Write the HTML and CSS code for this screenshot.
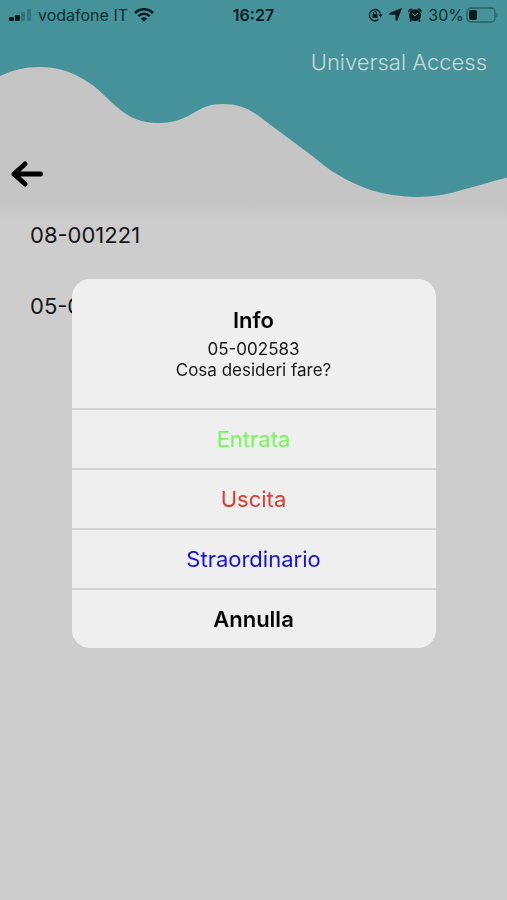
FILE: index.html
```html
<!DOCTYPE html>
<html lang="it">
<head>
<meta charset="utf-8">
<meta name="viewport" content="width=device-width, initial-scale=1">
<title>Universal Access</title>
<link rel="stylesheet" href="styles.css">
</head>
<body>
<div class="app">
  <header class="header">
    <svg class="wave" viewBox="0 0 507 200" preserveAspectRatio="none" aria-hidden="true">
      <path d="M0 0H507V177.500C490 182 477 186 455 192C437 196.500 425 197 414 197C385 196 360 189 335 173C325 167 319 161 311 155L264 120C250 109 240 104 223 104C210 104 203 107 190 115C181 120 171 123 158 123C142 123 130 118 118 108C107 99 99 88 83 79C70 71 56 67 40 67C25 67 13 70 0 76Z"/>
    </svg>
    <div class="status">
      <div class="status-side">
        <svg width="24" height="14" viewBox="0 0 24 14" aria-hidden="true">
          <rect x="1" y="9" width="5" height="4" rx="1"/>
          <rect x="7" y="7" width="5" height="6" rx="1"/>
          <g opacity=".25"><rect x="13" y="4" width="4" height="9" rx="1"/><rect x="19" y="1" width="4" height="12" rx="1"/></g>
        </svg>
        <span>vodafone IT</span>
        <svg width="20" height="14" viewBox="0 0 20 14" fill="none" stroke="#071c1f" aria-hidden="true">
          <path stroke-width="2.600" d="M1 5C6 0 14 0 19 5M4.300 8.200C7.500 5 12.500 5 15.700 8.200"/>
          <path fill="#071c1f" stroke="none" d="M6.900 10.600Q10 8 13.100 10.600L10 14Z"/>
        </svg>
      </div>
      <strong class="clock">16:27</strong>
      <div class="status-side status-right">
        <svg width="15" height="14" viewBox="0 0 15 14" aria-hidden="true">
          <path fill="none" stroke="#071c1f" stroke-width="1.300" d="M10.500 11.500A5.600 5.600 0 1 1 12.600 7"/>
          <path d="M10.400 6.500H14.600L12.500 9.500Z"/>
          <rect x="4.500" y="6" width="5" height="4" rx=".5"/>
          <path fill="none" stroke="#071c1f" d="M5.500 6V5a1.500 1.500 0 0 1 3 0V6"/>
        </svg>
        <svg width="13" height="13" viewBox="0 0 13 13" aria-hidden="true"><path d="M13 0L8.500 12.200Q7.500 13.500 6.500 12V6.800H1Q-.8 6 1 4.800Z"/></svg>
        <svg width="14" height="14" viewBox="0 0 14 14" aria-hidden="true">
          <circle cx="7" cy="7.200" r="6"/>
          <path d="M.5 4.500A3 3 0 0 1 5 1ZM13.500 4.500A3 3 0 0 0 9 1ZM2 11L4 13 2.500 14 1.500 13ZM12 11L10 13 11.500 14 12.500 13Z"/>
          <path fill="none" stroke="#45929a" d="M4.300 5.500L7 8L10 5"/>
        </svg>
        <div class="battery">
          <span>30%</span>
          <svg width="33" height="16" viewBox="0 0 33 16" aria-hidden="true">
            <rect x="1" y="1" width="28" height="14" rx="4" fill="none" stroke="#285f66" stroke-width="1.300"/>
            <rect x="3" y="3" width="8" height="10" rx="2"/>
            <path fill="#285f66" d="M30.500 5.500Q33 8 30.500 10.500Z"/>
          </svg>
        </div>
      </div>
    </div>
    <h1 class="brand">Universal Access</h1>
    <button class="back" type="button" aria-label="Indietro">
      <svg width="34" height="28" viewBox="0 0 34 28" fill="none" stroke="#000" stroke-width="5" stroke-linecap="round" stroke-linejoin="round" aria-hidden="true"><path d="M30.500 14H4M15 4L4 14L15 24"/></svg>
    </button>
  </header>
  <main>
    <ul class="codes">
      <li>08-001221</li>
      <li>05-002583</li>
    </ul>
  </main>
</div>
<div class="overlay">
  <section class="alert" role="alertdialog" aria-modal="true" aria-labelledby="alert-title" aria-describedby="alert-message">
    <div class="alert-body">
      <h2 id="alert-title">Info</h2>
      <p id="alert-message">05-002583<br>Cosa desideri fare?</p>
    </div>
    <button class="action enter" type="button">Entrata</button>
    <button class="action exit" type="button">Uscita</button>
    <button class="action overtime" type="button">Straordinario</button>
    <button class="action cancel" type="button">Annulla</button>
  </section>
</div>
</body>
</html>
```
FILE: styles.css
```css
* {
  box-sizing: border-box;
}

body {
  margin: 0;
  background: #cdcdcd;
  color: #161616;
  font-family: Inter, "Liberation Sans", sans-serif;
}

svg {
  display: block;
  flex: none;
}

.app {
  min-height: 100vh;
}

.header {
  position: relative;
  height: 223px;
  background: linear-gradient(#c5c5c5 204px, #cdcdcd);
}

.wave {
  position: absolute;
  top: 0;
  left: 0;
  width: 100%;
  height: 200px;
  fill: #45929a;
}

.status {
  position: relative;
  display: grid;
  grid-template-columns: 1fr auto 1fr;
  align-items: center;
  height: 29px;
  padding: 0 8px;
  color: #0c3034;
  fill: #071c1f;
  font-size: 16px;
}

.status-side {
  display: flex;
  align-items: center;
  gap: 6px;
}

.status-right {
  justify-content: flex-end;
}

.battery {
  display: flex;
  align-items: center;
  gap: 2px;
}

.clock {
  color: #071c1f;
  font-weight: 600;
}

.brand {
  position: relative;
  margin: 17px 20px 0;
  color: #c9d8da;
  font-size: 22px;
  font-weight: 300;
  line-height: 32px;
  text-align: right;
}

.back {
  position: relative;
  display: block;
  margin: 82px 0 0 10px;
  padding: 0;
  border: 0;
  background: none;
}

.codes {
  margin: 0;
  padding: 0 30px;
  list-style: none;
  font-size: 22px;
  line-height: 24px;
}

.codes li {
  height: 71px;
}

.overlay {
  position: fixed;
  inset: 0;
  display: flex;
  align-items: center;
  justify-content: center;
  padding: 26px 16px 0;
}

.alert {
  width: 364px;
  max-width: 100%;
  overflow: hidden;
  border-radius: 18px;
  background: #efeff0;
  text-align: center;
}

.alert-body {
  padding: 26px 20px 27px;
}

.alert h2 {
  margin: 0 0 4px;
  color: #050505;
  font-size: 22px;
  font-weight: 600;
  line-height: 30px;
}

.alert p {
  margin: 0;
  font-size: 17px;
  line-height: 21px;
}

.action {
  display: block;
  width: 100%;
  height: 60px;
  padding: 0;
  border: 0;
  border-top: 2px solid #d3d3d4;
  background: none;
  font: 400 22px Inter, "Liberation Sans", sans-serif;
}

.enter {
  color: #75f65a;
}

.exit {
  color: #df3a32;
}

.overtime {
  color: #1412df;
}

.cancel {
  color: #050505;
  font-weight: 600;
}
```
